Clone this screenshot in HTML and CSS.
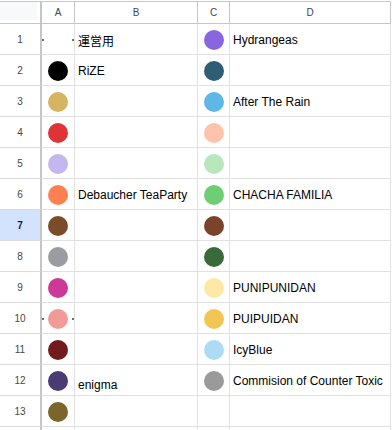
FILE: index.html
```html
<!DOCTYPE html>
<html>
<head>
<meta charset="utf-8">
<link rel="stylesheet" href="styles.css">
</head>
<body>
<div class="sheet">
  <div class="corner"></div>
  <div class="colhead">A</div>
  <div class="colhead">B</div>
  <div class="colhead">C</div>
  <div class="colhead">D</div>

  <div class="rowhead">1</div>
  <div class="cell pic marks"><span class="mark"></span><span class="mark"></span></div>
  <div class="cell txt cjk">運営用</div>
  <div class="cell pic"><span class="dot c-purple"></span></div>
  <div class="cell txt">Hydrangeas</div>

  <div class="rowhead">2</div>
  <div class="cell pic"><span class="dot c-black"></span></div>
  <div class="cell txt">RiZE</div>
  <div class="cell pic"><span class="dot c-teal"></span></div>
  <div class="cell txt"></div>

  <div class="rowhead">3</div>
  <div class="cell pic"><span class="dot c-gold"></span></div>
  <div class="cell txt"></div>
  <div class="cell pic"><span class="dot c-sky"></span></div>
  <div class="cell txt">After The Rain</div>

  <div class="rowhead">4</div>
  <div class="cell pic"><span class="dot c-red"></span></div>
  <div class="cell txt"></div>
  <div class="cell pic"><span class="dot c-peach"></span></div>
  <div class="cell txt"></div>

  <div class="rowhead">5</div>
  <div class="cell pic"><span class="dot c-lavender"></span></div>
  <div class="cell txt"></div>
  <div class="cell pic"><span class="dot c-mint"></span></div>
  <div class="cell txt"></div>

  <div class="rowhead">6</div>
  <div class="cell pic"><span class="dot c-orange"></span></div>
  <div class="cell txt">Debaucher TeaParty</div>
  <div class="cell pic"><span class="dot c-green"></span></div>
  <div class="cell txt">CHACHA FAMILIA</div>

  <div class="rowhead selected">7</div>
  <div class="cell pic"><span class="dot c-brown"></span></div>
  <div class="cell txt"></div>
  <div class="cell pic"><span class="dot c-brown2"></span></div>
  <div class="cell txt"></div>

  <div class="rowhead">8</div>
  <div class="cell pic"><span class="dot c-gray"></span></div>
  <div class="cell txt"></div>
  <div class="cell pic"><span class="dot c-forest"></span></div>
  <div class="cell txt"></div>

  <div class="rowhead">9</div>
  <div class="cell pic"><span class="dot c-magenta"></span></div>
  <div class="cell txt"></div>
  <div class="cell pic"><span class="dot c-cream"></span></div>
  <div class="cell txt">PUNIPUNIDAN</div>

  <div class="rowhead">10</div>
  <div class="cell pic marks"><span class="mark"></span><span class="dot c-salmon"></span><span class="mark"></span></div>
  <div class="cell txt"></div>
  <div class="cell pic"><span class="dot c-yellow"></span></div>
  <div class="cell txt">PUIPUIDAN</div>

  <div class="rowhead">11</div>
  <div class="cell pic"><span class="dot c-maroon"></span></div>
  <div class="cell txt"></div>
  <div class="cell pic"><span class="dot c-ice"></span></div>
  <div class="cell txt">IcyBlue</div>

  <div class="rowhead">12</div>
  <div class="cell pic"><span class="dot c-indigo"></span></div>
  <div class="cell txt bottom">enigma</div>
  <div class="cell pic"><span class="dot c-silver"></span></div>
  <div class="cell txt">Commision of Counter Toxic</div>

  <div class="rowhead">13</div>
  <div class="cell pic"><span class="dot c-olive"></span></div>
  <div class="cell txt"></div>
  <div class="cell pic"></div>
  <div class="cell txt"></div>

  <div class="rowhead"></div>
  <div class="cell pic"></div>
  <div class="cell txt"></div>
  <div class="cell pic"></div>
  <div class="cell txt"></div>
</div>
</body>
</html>
```

FILE: styles.css
```css
html, body {
  margin: 0;
  padding: 0;
  background: #ffffff;
  overflow: hidden;
}

.sheet {
  display: grid;
  grid-template-columns: 42px 33px 123px 32px 161px;
  grid-template-rows: 23px;
  grid-auto-rows: 31px;
  padding-top: 1px;
  font-family: "Liberation Sans", Arial, "Noto Sans CJK JP", sans-serif;
}

.corner,
.colhead {
  box-sizing: border-box;
  border-top: 1px solid #c4c7c5;
  border-bottom: 1px solid #c4c7c5;
}

.corner {
  background: #f8f9fa;
  border-right: 2px solid #c4c7c5;
  box-shadow: inset -3px -3px 0 #ffffff;
}

.colhead {
  border-right: 1px solid #c4c7c5;
  display: flex;
  align-items: center;
  justify-content: center;
  font-size: 10px;
  color: #444746;
  background: #ffffff;
}

.rowhead {
  box-sizing: border-box;
  border-right: 2px solid #c4c7c5;
  border-bottom: 1px solid #dadada;
  display: flex;
  align-items: center;
  justify-content: center;
  font-size: 10px;
  color: #444746;
  background: #ffffff;
  padding-top: 1px;
}

.rowhead.selected {
  background: #d3e3fd;
  color: #0b1a4a;
  font-weight: bold;
}

.cell {
  box-sizing: border-box;
  border-right: 1px solid #e1e1e1;
  border-bottom: 1px solid #e1e1e1;
  display: flex;
  align-items: center;
  min-width: 0;
  overflow: visible;
  white-space: nowrap;
}

.pic {
  justify-content: center;
  padding-top: 2px;
}

.pic.marks {
  justify-content: space-between;
  padding: 2px 0 0 0;
}

.mark {
  width: 2px;
  height: 2px;
  border-radius: 50%;
  background: #3c4043;
}

.txt {
  padding: 2px 3px 0 3px;
  font-size: 12px;
  color: #000000;
}

.txt.cjk {
  font-family: "Noto Sans CJK JP", "Liberation Sans", sans-serif;
  font-size: 12px;
}

.txt.bottom {
  align-items: flex-end;
  padding-bottom: 3px;
}

.dot {
  width: 20px;
  height: 20px;
  border-radius: 50%;
  flex: none;
}

.c-purple { background: #8766e0; }
.c-black { background: #000000; }
.c-teal { background: #2f5d73; }
.c-gold { background: #d6b462; }
.c-sky { background: #5db8e8; }
.c-red { background: #e03338; }
.c-peach { background: #ffc2aa; }
.c-lavender { background: #c4b6ef; }
.c-mint { background: #b8e6bd; }
.c-orange { background: #ff8152; }
.c-green { background: #6fcd74; }
.c-brown { background: #7b4c2a; }
.c-brown2 { background: #7c432c; }
.c-gray { background: #9a9ca1; }
.c-forest { background: #3a6a39; }
.c-magenta { background: #cc3996; }
.c-cream { background: #fde8a6; }
.c-salmon { background: #f09b98; }
.c-yellow { background: #f2c654; }
.c-maroon { background: #721b1d; }
.c-ice { background: #acdbf3; }
.c-indigo { background: #4a3b73; }
.c-silver { background: #9a9a9a; }
.c-olive { background: #7b652a; }
```
